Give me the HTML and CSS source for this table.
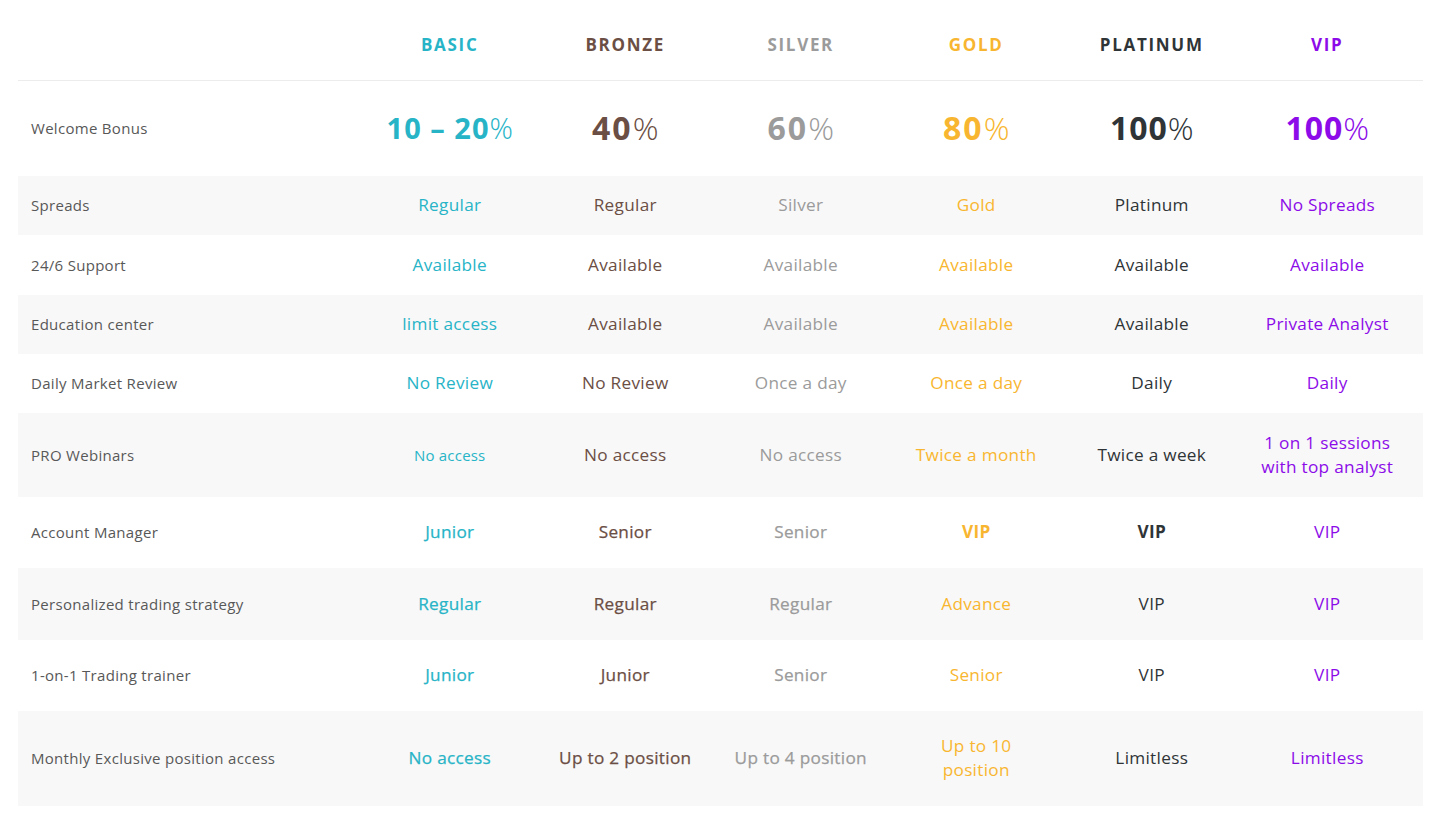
FILE: index.html
```html
<!DOCTYPE html>
<html lang="en">
<head>
<meta charset="utf-8">
<title>Account types</title>
<link rel="stylesheet" href="styles.css">
</head>
<body>
<div class="page">
<table class="plans">
  <colgroup>
    <col class="c-label"><col class="c-plan"><col class="c-plan"><col class="c-plan"><col class="c-plan"><col class="c-plan"><col class="c-plan"><col class="c-pad">
  </colgroup>
  <thead>
    <tr class="head">
      <th></th>
      <th class="basic">BASIC</th>
      <th class="bronze">BRONZE</th>
      <th class="silver">SILVER</th>
      <th class="gold">GOLD</th>
      <th class="platinum">PLATINUM</th>
      <th class="vip">VIP</th>
      <th></th>
    </tr>
  </thead>
  <tbody>
    <tr class="r-bonus">
      <td class="label">Welcome Bonus</td>
      <td class="big basic range"><b>10 – 20</b>%</td>
      <td class="big bronze two"><b>40</b>%</td>
      <td class="big silver two"><b>60</b>%</td>
      <td class="big gold two"><b>80</b>%</td>
      <td class="big platinum"><b>100</b>%</td>
      <td class="big vip"><b>100</b>%</td>
      <td></td>
    </tr>
    <tr class="alt r-s">
      <td class="label">Spreads</td>
      <td class="basic">Regular</td>
      <td class="bronze">Regular</td>
      <td class="silver">Silver</td>
      <td class="gold">Gold</td>
      <td class="platinum">Platinum</td>
      <td class="vip">No Spreads</td>
      <td></td>
    </tr>
    <tr class="r-m">
      <td class="label">24/6 Support</td>
      <td class="basic">Available</td>
      <td class="bronze">Available</td>
      <td class="silver">Available</td>
      <td class="gold">Available</td>
      <td class="platinum">Available</td>
      <td class="vip">Available</td>
      <td></td>
    </tr>
    <tr class="alt r-s">
      <td class="label">Education center</td>
      <td class="basic">limit access</td>
      <td class="bronze">Available</td>
      <td class="silver">Available</td>
      <td class="gold">Available</td>
      <td class="platinum">Available</td>
      <td class="vip">Private Analyst</td>
      <td></td>
    </tr>
    <tr class="r-s">
      <td class="label">Daily Market Review</td>
      <td class="basic">No Review</td>
      <td class="bronze">No Review</td>
      <td class="silver">Once a day</td>
      <td class="gold">Once a day</td>
      <td class="platinum">Daily</td>
      <td class="vip">Daily</td>
      <td></td>
    </tr>
    <tr class="alt r-pro">
      <td class="label">PRO Webinars</td>
      <td class="basic small">No access</td>
      <td class="bronze">No access</td>
      <td class="silver">No access</td>
      <td class="gold">Twice a month</td>
      <td class="platinum">Twice a week</td>
      <td class="vip">1 on 1 sessions<br>with top analyst</td>
      <td></td>
    </tr>
    <tr class="r-l">
      <td class="label">Account Manager</td>
      <td class="basic med">Junior</td>
      <td class="bronze med">Senior</td>
      <td class="silver med">Senior</td>
      <td class="gold strong">VIP</td>
      <td class="platinum strong">VIP</td>
      <td class="vip">VIP</td>
      <td></td>
    </tr>
    <tr class="alt r-l2">
      <td class="label">Personalized trading strategy</td>
      <td class="basic med">Regular</td>
      <td class="bronze med">Regular</td>
      <td class="silver med">Regular</td>
      <td class="gold">Advance</td>
      <td class="platinum">VIP</td>
      <td class="vip">VIP</td>
      <td></td>
    </tr>
    <tr class="r-l">
      <td class="label">1-on-1 Trading trainer</td>
      <td class="basic med">Junior</td>
      <td class="bronze med">Junior</td>
      <td class="silver med">Senior</td>
      <td class="gold">Senior</td>
      <td class="platinum">VIP</td>
      <td class="vip">VIP</td>
      <td></td>
    </tr>
    <tr class="alt r-xl">
      <td class="label">Monthly Exclusive position access</td>
      <td class="basic med">No access</td>
      <td class="bronze med">Up to 2 position</td>
      <td class="silver med">Up to 4 position</td>
      <td class="gold">Up to 10<br>position</td>
      <td class="platinum">Limitless</td>
      <td class="vip">Limitless</td>
      <td></td>
    </tr>
  </tbody>
</table>
</div>
</body>
</html>
```
FILE: styles.css
```css
html, body {
  margin: 0;
  padding: 0;
  background: #ffffff;
}
body {
  font-family: "Open Sans", "Liberation Sans", sans-serif;
  color: #555555;
}
.page {
  padding: 0 8px 0 18px;
}
.plans {
  width: 1405px;
  border-collapse: collapse;
  table-layout: fixed;
}
.c-label { width: 344px; }
.c-plan { width: 175.5px; }
.c-pad { width: 8px; }

.plans th, .plans td {
  padding: 0;
  text-align: center;
  vertical-align: middle;
}
.head th {
  height: 80px;
  padding-top: 10px;
  box-sizing: border-box;
  font-size: 17px;
  font-weight: 700;
  letter-spacing: 1.7px;
  border-bottom: 1px solid #ececec;
}
.plans td {
  font-size: 17.2px;
  font-weight: 400;
  letter-spacing: 0.3px;
  line-height: 24px;
}
.plans td.label {
  text-align: left;
  padding-left: 13px;
  font-size: 15px;
  letter-spacing: 0.3px;
  color: #585858;
}
.alt td { background: #f8f8f8; }

.r-bonus td { height: 95px; }
.r-s td { height: 59px; }
.r-m td { height: 60px; }
.r-pro td { height: 84px; }
.r-l td { height: 71px; }
.r-l2 td { height: 72px; }
.r-xl td { height: 95px; }

.plans td.big {
  font-size: 32px;
  font-weight: 300;
  letter-spacing: 0;
  line-height: 40px;
}
.big b {
  font-weight: 700;
  letter-spacing: 1px;
}
.two b {
  letter-spacing: 2px;
}
.plans td.range {
  font-size: 29px;
  word-spacing: 0;
}

.plans td.small { font-size: 15px; letter-spacing: 0.2px; }
.plans td.med {
  -webkit-text-stroke: 0.25px currentColor;
}
.plans td.strong { font-weight: 700; }

.basic { color: #27b4c7; }
.bronze { color: #6b4e44; }
.silver { color: #9b9b9b; }
.gold { color: #f8b630; }
.platinum { color: #2f3437; }
.vip { color: #8c0be8; }
```
